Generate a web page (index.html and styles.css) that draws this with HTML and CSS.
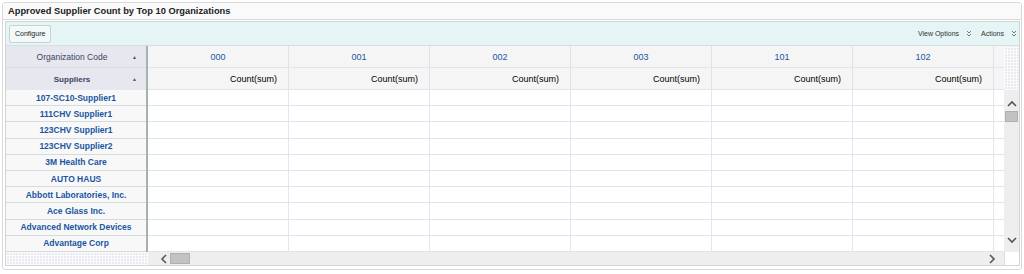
FILE: index.html
```html
<!DOCTYPE html>
<html lang="en">
<head>
  <meta charset="UTF-8">
  <title>Approved Supplier Count by Top 10 Organizations</title>
  <link rel="stylesheet" href="styles.css">
</head>
<body>
  <div class="panel">
    <div class="panel-title">Approved Supplier Count by Top 10 Organizations</div>
    <div class="panel-body">
      <div class="toolbar">
        <button class="btn">Configure</button>
        <div class="menus">
          <span class="menu">View Options
            <svg width="6" height="7" viewBox="0 0 6 7"><path d="M1 1l2 2 2-2M1 4l2 2 2-2" fill="none" stroke="#777" stroke-width="1"/></svg>
          </span>
          <span class="menu">Actions
            <svg width="6" height="7" viewBox="0 0 6 7"><path d="M1 1l2 2 2-2M1 4l2 2 2-2" fill="none" stroke="#777" stroke-width="1"/></svg>
          </span>
        </div>
      </div>

      <div class="pivot">
        <!-- top-left: layer labels -->
        <div class="corner">
          <div class="layer">Organization Code <span class="sort">&#9650;</span></div>
          <div class="layer bold">Suppliers <span class="sort">&#9650;</span></div>
        </div>

        <!-- column headers -->
        <div class="col-heads">
          <div class="head-row">
            <div class="ch link">000</div>
            <div class="ch link">001</div>
            <div class="ch link">002</div>
            <div class="ch link">003</div>
            <div class="ch link">101</div>
            <div class="ch link">102</div>
            <div class="ch rest"></div>
          </div>
          <div class="head-row">
            <div class="ch measure">Count(sum)</div>
            <div class="ch measure">Count(sum)</div>
            <div class="ch measure">Count(sum)</div>
            <div class="ch measure">Count(sum)</div>
            <div class="ch measure">Count(sum)</div>
            <div class="ch measure">Count(sum)</div>
            <div class="ch rest"></div>
          </div>
        </div>
        <div class="dots"></div>

        <!-- row headers -->
        <div class="row-heads">
          <div class="rh">107-SC10-Supplier1</div>
          <div class="rh">111CHV Supplier1</div>
          <div class="rh">123CHV Supplier1</div>
          <div class="rh">123CHV Supplier2</div>
          <div class="rh">3M Health Care</div>
          <div class="rh">AUTO HAUS</div>
          <div class="rh">Abbott Laboratories, Inc.</div>
          <div class="rh">Ace Glass Inc.</div>
          <div class="rh">Advanced Network Devices</div>
          <div class="rh">Advantage Corp</div>
        </div>

        <!-- data cells -->
        <div class="cells" id="cells"></div>

        <div class="vscroll">
          <svg width="10" height="7" viewBox="0 0 10 7"><path d="M1 6l4-4 4 4" fill="none" stroke="#555" stroke-width="1.6"/></svg>
          <div class="vthumb"></div>
          <div class="spacer"></div>
          <svg width="10" height="7" viewBox="0 0 10 7"><path d="M1 1l4 4 4-4" fill="none" stroke="#555" stroke-width="1.6"/></svg>
        </div>

        <div class="dots"></div>
        <div class="hscroll">
          <svg width="7" height="10" viewBox="0 0 7 10"><path d="M6 1l-4 4 4 4" fill="none" stroke="#555" stroke-width="1.6"/></svg>
          <div class="hthumb"></div>
          <div class="spacer"></div>
          <svg width="7" height="10" viewBox="0 0 7 10"><path d="M1 1l4 4-4 4" fill="none" stroke="#555" stroke-width="1.6"/></svg>
        </div>
        <div class="blank"></div>
      </div>
    </div>
  </div>

  <script>
    // Build the empty grid body: 10 rows x 7 columns
    const cells = document.getElementById('cells');
    for (let r = 0; r < 10; r++) {
      const row = document.createElement('div');
      row.className = 'data-row';
      for (let c = 0; c < 7; c++) {
        const cell = document.createElement('div');
        cell.className = c === 6 ? 'cell rest' : 'cell';
        row.appendChild(cell);
      }
      cells.appendChild(row);
    }
  </script>
</body>
</html>
```

FILE: styles.css
```css
body {
  margin: 0;
  font-family: 'Liberation Sans', Arial, sans-serif;
  background: #fff;
  color: #222;
}
.panel {
  margin: 2px 2px 0 2px;
  height: 268px;
  box-sizing: border-box;
  border: 1px solid #d9d9d9;
  border-radius: 3px;
  display: flex;
  flex-direction: column;
  overflow: hidden;
}
.panel-title {
  height: 16px;
  line-height: 16px;
  padding-left: 5px;
  font-size: 9.3px;
  font-weight: bold;
  color: #222;
  border-bottom: 1px solid #d9d9d9;
  background: #fafafa;
}
.panel-body {
  margin: 1px 1px 0 2px;
  border: 1px solid #cfd6d6;
  display: flex;
  flex-direction: column;
}
.toolbar {
  height: 23px;
  background: #e5f4f4;
  display: flex;
  align-items: center;
  justify-content: space-between;
  padding: 0 2px 0 3px;
  border-bottom: 1px solid #d6dede;
}
.btn {
  font-family: inherit;
  font-size: 7px;
  height: 18px;
  padding: 0 5px;
  color: #222;
  background: #f3f8f8;
  border: 1px solid #c8d2d2;
  border-radius: 2px;
}
.menus {
  display: flex;
  gap: 9px;
  font-size: 7px;
  color: #333;
}
.menu {
  display: flex;
  align-items: center;
  gap: 7px;
}
.pivot {
  display: grid;
  grid-template-columns: 142px 1fr 15px;
  grid-template-rows: 44px 162px 13px;
  font-size: 9px;
}
.corner {
  background: #e6e7ef;
  border-right: 2px solid #a9b0b0;
  display: grid;
  grid-template-rows: 22px 22px;
}
.layer {
  display: flex;
  align-items: center;
  justify-content: center;
  padding-right: 8px;
  position: relative;
  color: #3a4660;
  font-size: 8.5px;
}
.layer:first-child {
  border-bottom: 1px solid #d8d9e2;
}
.layer.bold {
  font-weight: bold;
  font-size: 8px;
}
.sort {
  position: absolute;
  right: 9px;
  font-size: 5px;
  color: #555;
}
.col-heads {
  background: #f5f5f5;
  display: grid;
  grid-template-rows: 22px 22px;
  overflow: hidden;
}
.head-row {
  display: flex;
  border-bottom: 1px solid #e2e4ea;
}
.ch {
  width: 141px;
  flex: none;
  box-sizing: border-box;
  border-right: 1px solid #dde3ea;
  display: flex;
  align-items: center;
}
.ch.link {
  justify-content: center;
  color: #1a56a0;
  font-size: 9px;
}
.ch.measure {
  justify-content: flex-end;
  padding-right: 11px;
  color: #000;
  font-size: 9px;
}
.rest {
  flex: 1;
  width: auto;
  border-right: none;
}
.dots {
  background-color: #e9e9ef;
  background-image:
    repeating-linear-gradient(90deg, #fbfbfd 0 1px, transparent 1px 3px),
    repeating-linear-gradient(0deg, #fbfbfd 0 1px, transparent 1px 3px);
}
.row-heads {
  display: grid;
  grid-template-rows: repeat(10, 1fr);
  background: #f8f8f8;
  border-right: 2px solid #a9b0b0;
}
.rh {
  display: flex;
  align-items: center;
  justify-content: center;
  font-size: 8.5px;
  font-weight: bold;
  color: #1a56a0;
  border-bottom: 1px solid #d5dbdb;
}
.cells {
  display: grid;
  grid-template-rows: repeat(10, 1fr);
  background: #fff;
  overflow: hidden;
}
.data-row {
  display: flex;
  border-bottom: 1px solid #dfe3ec;
}
.cell {
  width: 141px;
  flex: none;
  box-sizing: border-box;
  border-right: 1px solid #e2e6f0;
}
.vscroll {
  background: #eeeeee;
  display: flex;
  flex-direction: column;
  align-items: center;
  padding: 10px 0 8px;
  box-sizing: border-box;
}
.vthumb {
  margin-top: 4px;
  width: 13px;
  height: 11px;
  background: #c2c2c2;
  border: 1px solid #b0b0b0;
  box-sizing: border-box;
}
.spacer {
  flex: 1;
}
.hscroll {
  background: #eeeeee;
  display: flex;
  align-items: center;
  padding: 0 8px 0 12px;
}
.hthumb {
  margin-left: 3px;
  width: 20px;
  height: 11px;
  background: #c2c2c2;
  border: 1px solid #b0b0b0;
  box-sizing: border-box;
}
.blank {
  background: #fff;
  border-left: 1px solid #ddd;
}
```
